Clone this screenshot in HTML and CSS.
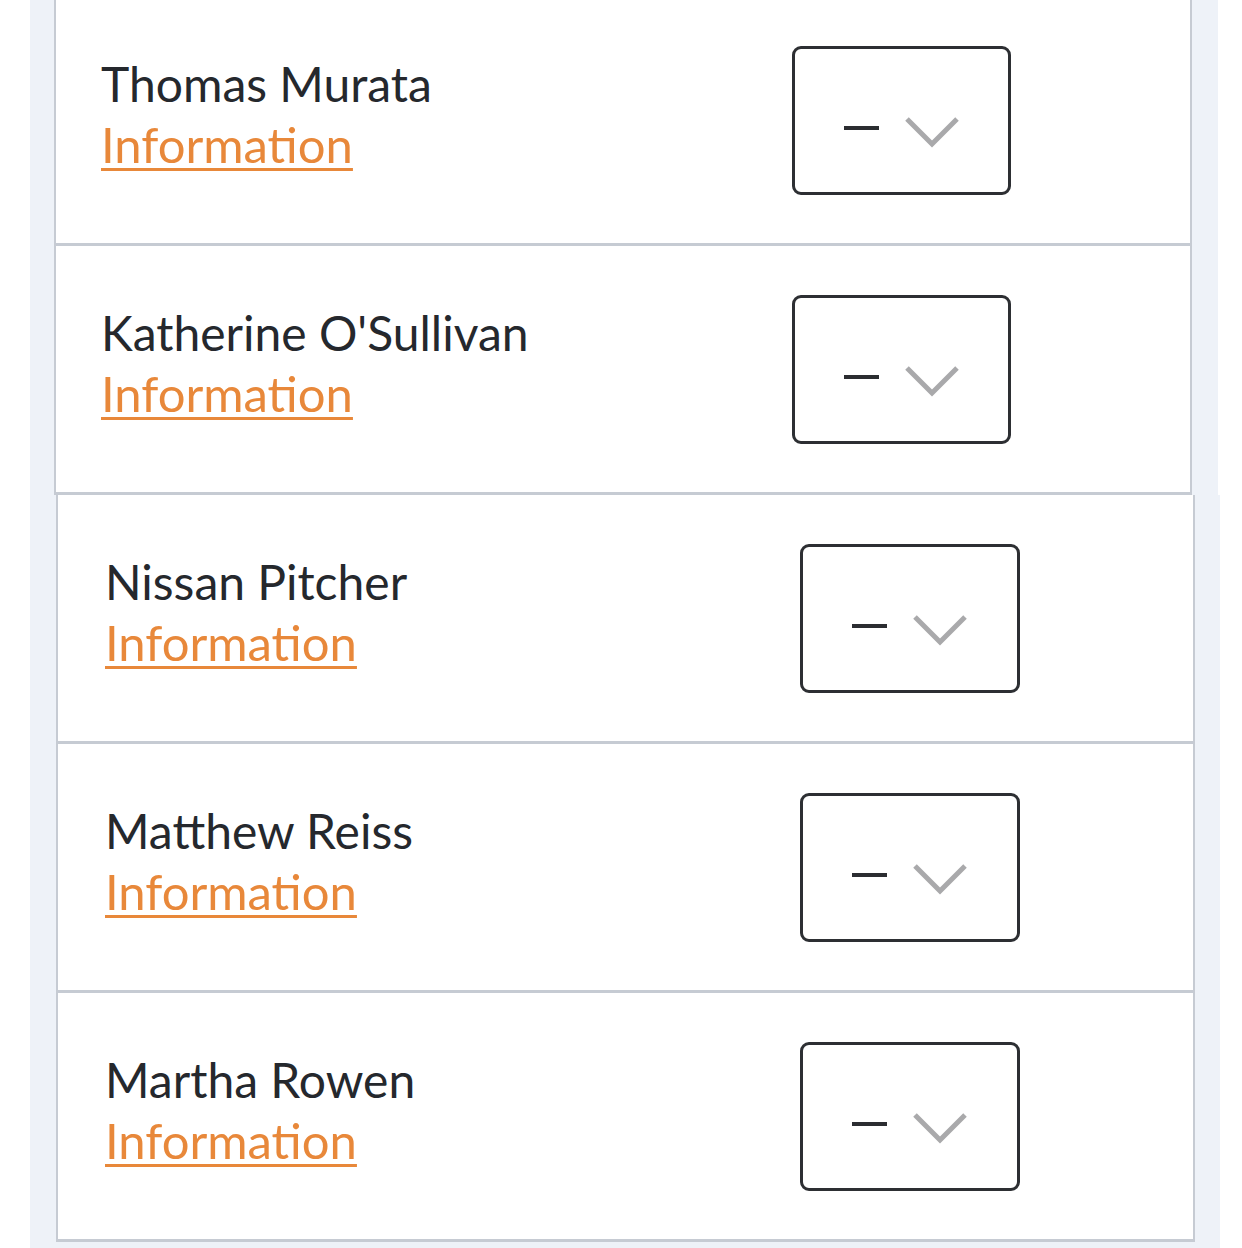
FILE: index.html
```html
<!DOCTYPE html>
<html lang="en">
<head>
  <meta charset="UTF-8">
  <title>Attendees</title>
  <link rel="stylesheet" href="styles.css">
</head>
<body>
  <div class="frame frame-top">
    <div class="list">
      <div class="row">
        <div class="person">
          <div class="name">Thomas Murata</div>
          <a class="info" href="#">Information</a>
        </div>
        <div class="pick">
          <span class="dash"></span>
          <svg class="chev" width="56" height="32" viewBox="0 0 56 32"><path d="M3 3 L28 28 L53 3" fill="none" stroke="#a9a9ab" stroke-width="5"/></svg>
        </div>
      </div>
      <div class="row">
        <div class="person">
          <div class="name">Katherine O'Sullivan</div>
          <a class="info" href="#">Information</a>
        </div>
        <div class="pick">
          <span class="dash"></span>
          <svg class="chev" width="56" height="32" viewBox="0 0 56 32"><path d="M3 3 L28 28 L53 3" fill="none" stroke="#a9a9ab" stroke-width="5"/></svg>
        </div>
      </div>
    </div>
  </div>

  <div class="frame frame-bottom">
    <div class="list">
      <div class="row">
        <div class="person">
          <div class="name">Nissan Pitcher</div>
          <a class="info" href="#">Information</a>
        </div>
        <div class="pick">
          <span class="dash"></span>
          <svg class="chev" width="56" height="32" viewBox="0 0 56 32"><path d="M3 3 L28 28 L53 3" fill="none" stroke="#a9a9ab" stroke-width="5"/></svg>
        </div>
      </div>
      <div class="row">
        <div class="person">
          <div class="name">Matthew Reiss</div>
          <a class="info" href="#">Information</a>
        </div>
        <div class="pick">
          <span class="dash"></span>
          <svg class="chev" width="56" height="32" viewBox="0 0 56 32"><path d="M3 3 L28 28 L53 3" fill="none" stroke="#a9a9ab" stroke-width="5"/></svg>
        </div>
      </div>
      <div class="row">
        <div class="person">
          <div class="name">Martha Rowen</div>
          <a class="info" href="#">Information</a>
        </div>
        <div class="pick">
          <span class="dash"></span>
          <svg class="chev" width="56" height="32" viewBox="0 0 56 32"><path d="M3 3 L28 28 L53 3" fill="none" stroke="#a9a9ab" stroke-width="5"/></svg>
        </div>
      </div>
    </div>
  </div>
</body>
</html>
```

FILE: styles.css
```css
body {
  margin: 0;
  background: #ffffff;
  font-family: Lato, "Noto Sans", sans-serif;
  color: #25282d;
  overflow: hidden;
}

.frame {
  margin-left: 30px;
  background: #eef2f8;
}

.frame-top {
  width: 1188px;
  padding-left: 24px;
  box-sizing: border-box;
  margin-top: -3px;
}

.frame-bottom {
  width: 1190px;
  padding-left: 26px;
  padding-bottom: 40px;
  box-sizing: border-box;
}

.list {
  background: #ffffff;
  border-left: 2px solid #c6cbd3;
  border-right: 2px solid #c6cbd3;
  box-sizing: border-box;
}

.frame-top .list {
  width: 1138px;
}

.frame-bottom .list {
  width: 1139px;
}

.row {
  height: 246px;
  border-bottom: 3px solid #c6cbd3;
  display: flex;
  align-items: center;
  justify-content: space-between;
  padding: 0 179px 0 45px;
}

.frame-bottom .row {
  padding: 0 173px 0 47px;
}

.person {
  padding-bottom: 12px;
}

.name {
  font-size: 48px;
  line-height: 60px;
}

.info {
  display: block;
  font-size: 49px;
  line-height: 60px;
  color: #e8883a;
  text-decoration: underline;
  text-decoration-thickness: 3px;
  text-underline-offset: 5px;
}

.pick {
  width: 219px;
  height: 149px;
  box-sizing: border-box;
  border: 3px solid #2d2f33;
  border-radius: 9px;
  display: flex;
  align-items: center;
  justify-content: center;
  gap: 25px;
  padding-top: 24px;
}

.frame-bottom .pick {
  width: 220px;
}

.dash {
  width: 35px;
  height: 4px;
  background: #2b2d31;
  margin-bottom: 8px;
}

.chev {
  display: block;
}
```
